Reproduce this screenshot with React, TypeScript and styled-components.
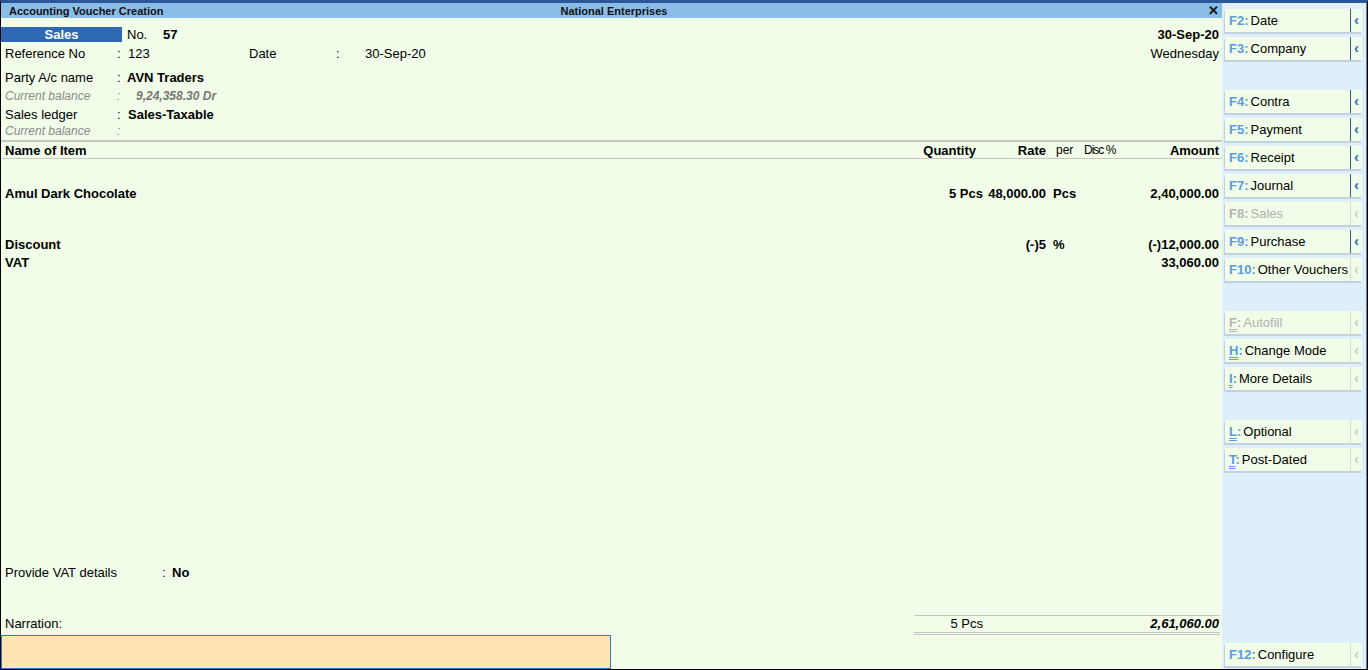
import React from 'react';
import styled, { createGlobalStyle } from 'styled-components';

const Global = createGlobalStyle`
  html, body { margin: 0; padding: 0; background: #ffffff; }
  body { font-family: "Liberation Sans", Arial, sans-serif; font-size: 13px; color: #000; }
  * { box-sizing: border-box; }
`;

const Frame = styled.div`
  width: 1368px;
  height: 670px;
  display: flex;
  border-top: 3px solid #2b5796;
  border-left: 1px solid #000;
  border-right: 1px solid #000;
  border-bottom: 1px solid #000;
  overflow: hidden;
`;

const Main = styled.div`
  width: 1221px;
  display: flex;
  flex-direction: column;
  background: #f1fde9;
`;

const TitleBar = styled.div`
  height: 15px;
  flex: none;
  background: #89bde7;
  display: grid;
  grid-template-columns: 1fr auto 1fr;
  align-items: center;
  padding: 0 3px 0 8px;
  font-size: 11px;
  font-weight: bold;
  color: #111;
`;

const Close = styled.span`
  justify-self: end;
  font-size: 13px;
  line-height: 13px;
`;

const Header = styled.div`
  margin-top: 8px;
  display: flex;
  flex-direction: column;
`;

const Row = styled.div<{ $h: number; $pl?: number }>`
  height: ${p => p.$h}px;
  flex: none;
  display: flex;
  align-items: center;
  padding-left: ${p => (p.$pl ?? 4)}px;
  padding-right: 3px;
  white-space: nowrap;
`;

const Badge = styled.div`
  width: 121px;
  height: 15px;
  background: #2f69b4;
  color: #fff;
  font-weight: bold;
  text-align: center;
  line-height: 15px;
`;

const Label = styled.span<{ $w: number; $muted?: boolean }>`
  width: ${p => p.$w}px;
  flex: none;
  color: ${p => (p.$muted ? '#8a8a8a' : '#000')};
  font-style: ${p => (p.$muted ? 'italic' : 'normal')};
  font-size: ${p => (p.$muted ? '12px' : '13px')};
`;

const Value = styled.span<{ $bold?: boolean; $muted?: boolean; $pl?: number; $w?: number }>`
  font-weight: ${p => (p.$bold ? 'bold' : 'normal')};
  font-style: ${p => (p.$muted ? 'italic' : 'normal')};
  color: ${p => (p.$muted ? '#777' : '#000')};
  font-size: ${p => (p.$muted ? '12px' : '13px')};
  padding-left: ${p => p.$pl ?? 0}px;
  ${p => (p.$w ? `width: ${p.$w}px; flex: none;` : '')}
`;

const RightText = styled.span<{ $bold?: boolean }>`
  margin-left: auto;
  font-weight: ${p => (p.$bold ? 'bold' : 'normal')};
`;

const TableHead = styled.div`
  margin-top: 4px;
  border-top: 2px solid #c6c6c6;
  border-bottom: 1px solid #c6c6c6;
  height: 19px;
  flex: none;
  display: grid;
  grid-template-columns: 1fr 63px 63px 34px 50px 89px;
  align-items: center;
  padding: 0 3px 0 4px;
`;

const ItemRow = styled.div<{ $mt?: number }>`
  margin-top: ${p => p.$mt ?? 0}px;
  height: 18px;
  flex: none;
  display: grid;
  grid-template-columns: 1fr 63px 63px 34px 50px 89px;
  align-items: center;
  padding: 0 3px 0 4px;
  white-space: nowrap;
`;

const Cell = styled.span<{ $align?: 'left' | 'right'; $bold?: boolean; $pl?: number; $pr?: number; $size?: number; $narrow?: boolean }>`
  text-align: ${p => p.$align ?? 'left'};
  font-weight: ${p => (p.$bold ? 'bold' : 'normal')};
  padding-left: ${p => p.$pl ?? 0}px;
  padding-right: ${p => p.$pr ?? 0}px;
  font-size: ${p => p.$size ?? 13}px;
  letter-spacing: ${p => (p.$narrow ? '-1px' : 'normal')};
  white-space: nowrap;
`;

const Spacer = styled.div`
  flex: 1;
`;

const FooterRow = styled.div`
  margin-top: 34px;
  display: flex;
  flex: none;
  height: 20px;
`;

const Narration = styled.div`
  flex: 1;
  padding: 1px 0 0 4px;
  line-height: 16px;
`;

const Totals = styled.div`
  width: 306px;
  margin-right: 2px;
  border-top: 1px solid #c4c4c4;
  border-bottom: 3px double #c4c4c4;
  display: grid;
  grid-template-columns: 69px 1fr;
  align-items: center;
  line-height: 16px;
`;

const TotalQty = styled.span`
  text-align: right;
`;

const TotalAmt = styled.span`
  text-align: right;
  font-weight: bold;
  font-style: italic;
  padding-right: 1px;
`;

const NarrationInput = styled.div`
  width: 610px;
  height: 34px;
  flex: none;
  background: #ffe5b1;
  border: 1px solid #2b7bbf;
`;

const Side = styled.div`
  flex: 1;
  background: #dfeefb;
  border-right: 1px solid #6d7f93;
  display: flex;
  flex-direction: column;
  padding: 6px 4px 0 3px;
`;

const Btn = styled.div<{ $bottom?: boolean }>`
  height: 23px;
  flex: none;
  margin-bottom: ${p => (p.$bottom ? 3 : 5)}px;
  margin-top: ${p => (p.$bottom ? 'auto' : '0')};
  display: flex;
  background: #f2fde9;
  box-shadow: -1px 2px 0 #c3d1df;
`;

const BtnMain = styled.div<{ $disabled?: boolean }>`
  flex: 1;
  display: flex;
  align-items: center;
  padding-left: 4px;
  white-space: nowrap;
  color: ${p => (p.$disabled ? '#b0b0b0' : '#000')};
`;

const Key = styled.span<{ $disabled?: boolean }>`
  color: ${p => (p.$disabled ? '#b4b4b4' : '#5b9be0')};
  font-weight: bold;
  margin-right: 2px;
`;

const HotLetter = styled.span`
  text-decoration: underline double;
  text-underline-offset: 2px;
`;

const Chevron = styled.div<{ $on?: boolean }>`
  width: 12px;
  flex: none;
  border-left: 1px solid ${p => (p.$on ? '#2e5c9c' : '#d4ddd2')};
  color: ${p => (p.$on ? '#3b6eb4' : '#c8cfc8')};
  display: flex;
  align-items: center;
  justify-content: center;
  font-weight: bold;
  font-size: 15px;
  padding-bottom: 2px;
`;

const Gap = styled.div`
  height: 25px;
  flex: none;
`;

type BtnDef = { k: string; label: string; on?: boolean; disabled?: boolean; hot?: boolean; gapBefore?: boolean };

const buttons: BtnDef[] = [
  { k: 'F2', label: 'Date', on: true },
  { k: 'F3', label: 'Company', on: true },
  { k: 'F4', label: 'Contra', on: true, gapBefore: true },
  { k: 'F5', label: 'Payment', on: true },
  { k: 'F6', label: 'Receipt', on: true },
  { k: 'F7', label: 'Journal', on: true },
  { k: 'F8', label: 'Sales', disabled: true },
  { k: 'F9', label: 'Purchase', on: true },
  { k: 'F10', label: 'Other Vouchers' },
  { k: 'F', label: 'Autofill', disabled: true, hot: true, gapBefore: true },
  { k: 'H', label: 'Change Mode', hot: true },
  { k: 'I', label: 'More Details', hot: true },
  { k: 'L', label: 'Optional', hot: true, gapBefore: true },
  { k: 'T', label: 'Post-Dated', hot: true },
];

const SideButton: React.FC<{ b: BtnDef; bottom?: boolean }> = ({ b, bottom }) => (
  <Btn $bottom={bottom}>
    <BtnMain $disabled={b.disabled}>
      <Key $disabled={b.disabled}>
        {b.hot ? <HotLetter>{b.k}</HotLetter> : b.k}:
      </Key>
      {b.label}
    </BtnMain>
    <Chevron $on={b.on}>‹</Chevron>
  </Btn>
);

export default function App() {
  return (
    <>
      <Global />
      <Frame>
        <Main>
          <TitleBar>
            <span>Accounting Voucher Creation</span>
            <span>National Enterprises</span>
            <Close>✕</Close>
          </TitleBar>
          <Header>
            <Row $h={16} $pl={0}>
              <Badge>Sales</Badge>
              <Value $w={41} $pl={5}>No.</Value>
              <Value $bold>57</Value>
              <RightText $bold>30-Sep-20</RightText>
            </Row>
            <Row $h={22}>
              <Label $w={112}>Reference No</Label>
              <Label $w={11}>:</Label>
              <Value $w={121}>123</Value>
              <Label $w={87}>Date</Label>
              <Label $w={29}>:</Label>
              <Value>30-Sep-20</Value>
              <RightText>Wednesday</RightText>
            </Row>
            <Row $h={26}>
              <Label $w={112}>Party A/c name</Label>
              <Label $w={10}>:</Label>
              <Value $bold>AVN Traders</Value>
            </Row>
            <Row $h={12}>
              <Label $w={112} $muted>Current balance</Label>
              <Label $w={11} $muted>:</Label>
              <Value $bold $muted $pl={8}>9,24,358.30 Dr</Value>
            </Row>
            <Row $h={24}>
              <Label $w={112}>Sales ledger</Label>
              <Label $w={11}>:</Label>
              <Value $bold>Sales-Taxable</Value>
            </Row>
            <Row $h={10}>
              <Label $w={112} $muted>Current balance</Label>
              <Label $w={11} $muted>:</Label>
            </Row>
          </Header>
          <TableHead>
            <Cell $bold>Name of Item</Cell>
            <Cell $bold $align="right" $pr={7}>Quantity</Cell>
            <Cell $bold $align="right">Rate</Cell>
            <Cell $pl={10} $size={12}>per</Cell>
            <Cell $pl={4} $size={12} $narrow>Disc %</Cell>
            <Cell $bold $align="right">Amount</Cell>
          </TableHead>
          <ItemRow $mt={25}>
            <Cell $bold>Amul Dark Chocolate</Cell>
            <Cell $bold $align="right">5 Pcs</Cell>
            <Cell $bold $align="right">48,000.00</Cell>
            <Cell $bold $pl={7}>Pcs</Cell>
            <Cell />
            <Cell $bold $align="right">2,40,000.00</Cell>
          </ItemRow>
          <ItemRow $mt={33}>
            <Cell $bold>Discount</Cell>
            <Cell />
            <Cell $bold $align="right">(-)5</Cell>
            <Cell $bold $pl={7}>%</Cell>
            <Cell />
            <Cell $bold $align="right">(-)12,000.00</Cell>
          </ItemRow>
          <ItemRow>
            <Cell $bold>VAT</Cell>
            <Cell />
            <Cell />
            <Cell />
            <Cell />
            <Cell $bold $align="right">33,060.00</Cell>
          </ItemRow>
          <Spacer />
          <Row $h={18}>
            <Label $w={157}>Provide VAT details</Label>
            <Label $w={10}>:</Label>
            <Value $bold>No</Value>
          </Row>
          <FooterRow>
            <Narration>Narration:</Narration>
            <Totals>
              <TotalQty>5 Pcs</TotalQty>
              <TotalAmt>2,61,060.00</TotalAmt>
            </Totals>
          </FooterRow>
          <NarrationInput />
        </Main>
        <Side>
          {buttons.map(b => (
            <React.Fragment key={b.k}>
              {b.gapBefore && <Gap />}
              <SideButton b={b} />
            </React.Fragment>
          ))}
          <SideButton b={{ k: 'F12', label: 'Configure' }} bottom />
        </Side>
      </Frame>
    </>
  );
}
